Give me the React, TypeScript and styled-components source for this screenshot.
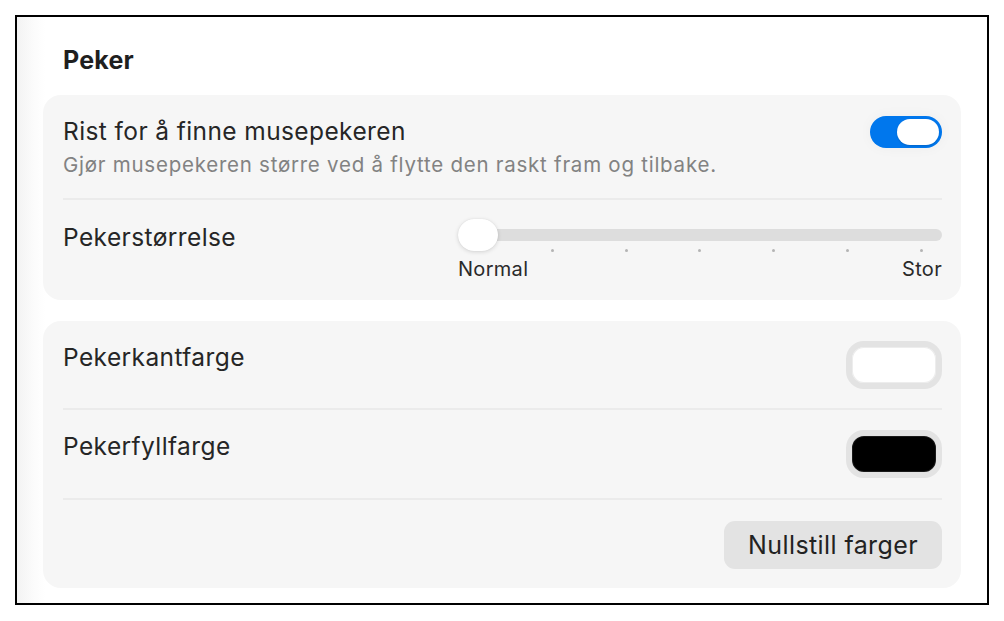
import React, { useState } from "react";
import styled, { createGlobalStyle } from "styled-components";

const GlobalStyle = createGlobalStyle`
  html, body {
    margin: 0;
    padding: 0;
    background: #ffffff;
  }
  body {
    font-family: Inter, "Noto Sans", "Liberation Sans", sans-serif;
    color: #262626;
    -webkit-font-smoothing: antialiased;
  }
`;

const Page = styled.div`
  padding: 15px;
`;

const Frame = styled.div`
  width: 974px;
  height: 590px;
  box-sizing: border-box;
  border: 2px solid #000;
  background: linear-gradient(to right, #f3f3f3 0px, #fbfbfb 16px, #ffffff 28px);
  padding: 0 26px 0 26px;
  display: flex;
  flex-direction: column;
  gap: 21px;
  overflow: hidden;
`;

const Heading = styled.h2`
  margin: 28px 0 -1px;
  padding-left: 20px;
  font-size: 25px;
  line-height: 30px;
  font-weight: 700;
  letter-spacing: 0.2px;
  color: #1f1f1f;
`;

const Card = styled.section`
  background: #f6f6f6;
  border-radius: 18px;
  padding: 0 19px 0 20px;
  display: flex;
  flex-direction: column;
`;

const Row = styled.div<{ $pad: string; $last?: boolean }>`
  display: flex;
  justify-content: space-between;
  align-items: flex-start;
  padding: ${(p) => p.$pad};
  border-bottom: 2px solid ${(p) => (p.$last ? "transparent" : "#ebebeb")};
`;

const TextBlock = styled.div`
  display: flex;
  flex-direction: column;
`;

const Label = styled.div<{ $offset?: number }>`
  font-size: 24.5px;
  line-height: 28px;
  letter-spacing: 0.4px;
  color: #262626;
  margin-top: ${(p) => p.$offset ?? 0}px;
`;

const Hint = styled.div`
  font-size: 20.5px;
  line-height: 24px;
  letter-spacing: 0.75px;
  margin-top: 8px;
  color: #828282;
`;

const Toggle = styled.button<{ $on: boolean }>`
  width: 72px;
  height: 32px;
  border: none;
  border-radius: 16px;
  padding: 0 3px;
  background: ${(p) => (p.$on ? "#0077ed" : "#d9d9d9")};
  display: flex;
  align-items: center;
  justify-content: ${(p) => (p.$on ? "flex-end" : "flex-start")};
  cursor: pointer;
  box-shadow: 0 0 14px rgba(0, 0, 0, 0.04);
`;

const ToggleKnob = styled.span`
  width: 42px;
  height: 26px;
  border-radius: 13px;
  background: #ffffff;
  box-shadow: 0 1px 2px rgba(0, 0, 0, 0.15);
`;

const SliderBox = styled.div`
  width: 484px;
  display: flex;
  flex-direction: column;
`;

const Rail = styled.div`
  position: relative;
  height: 32px;
  display: flex;
  align-items: center;
`;

const Track = styled.div`
  width: 100%;
  height: 12px;
  border-radius: 6px;
  background: #dddddd;
`;

const Thumb = styled.div`
  position: absolute;
  top: 0;
  width: 40px;
  height: 32px;
  border-radius: 16px;
  background: #ffffff;
  box-shadow: 0 1px 4px rgba(0, 0, 0, 0.14), 0 0 1px rgba(0, 0, 0, 0.1);
`;

const Ticks = styled.div`
  display: flex;
  justify-content: space-between;
  padding: 0 19px;
  margin-top: -2px;
`;

const Tick = styled.span<{ $covered?: boolean }>`
  width: 3px;
  height: 3px;
  border-radius: 50%;
  background: ${(p) => (p.$covered ? "transparent" : "#b4b4b4")};
`;

const ScaleLabels = styled.div`
  display: flex;
  justify-content: space-between;
  margin-top: 6px;
  font-size: 20px;
  line-height: 22px;
  letter-spacing: 0.3px;
  color: #2a2a2a;
`;

const Swatch = styled.div<{ $fill: string; $ring: string }>`
  width: 84px;
  height: 36px;
  border-radius: 18px;
  border: 6px solid #e3e3e3;
  background: ${(p) => p.$fill};
  box-shadow: inset 0 0 0 1px ${(p) => p.$ring};
`;

const ButtonRow = styled.div`
  display: flex;
  justify-content: flex-end;
  padding: 21px 0 19px;
`;

const ResetButton = styled.button`
  height: 48px;
  padding: 0 24px;
  border: none;
  border-radius: 11px;
  background: #e3e3e3;
  font-family: inherit;
  font-size: 25px;
  letter-spacing: 0.4px;
  color: #222222;
  cursor: pointer;
`;

const App = () => {
  const [shake, setShake] = useState(true);
  const [size] = useState(0);
  const steps = 7;

  return (
    <Page>
      <GlobalStyle />
      <Frame>
        <Heading>Peker</Heading>

        <Card>
          <Row $pad="21px 0 21px">
            <TextBlock>
              <Label $offset={1}>Rist for å finne musepekeren</Label>
              <Hint>Gjør musepekeren større ved å flytte den raskt fram og tilbake.</Hint>
            </TextBlock>
            <Toggle $on={shake} onClick={() => setShake(!shake)}>
              <ToggleKnob />
            </Toggle>
          </Row>
          <Row $pad="19px 0 18px" $last>
            <Label $offset={4}>Pekerstørrelse</Label>
            <SliderBox>
              <Rail>
                <Track />
                <Thumb style={{ left: (size / (steps - 1)) * 444 }} />
              </Rail>
              <Ticks>
                {Array.from({ length: steps }).map((_, i) => (
                  <Tick key={i} $covered={i === size} />
                ))}
              </Ticks>
              <ScaleLabels>
                <span>Normal</span>
                <span>Stor</span>
              </ScaleLabels>
            </SliderBox>
          </Row>
        </Card>

        <Card>
          <Row $pad="20px 0 19px">
            <Label $offset={2}>Pekerkantfarge</Label>
            <Swatch $fill="#ffffff" $ring="#ededed" />
          </Row>
          <Row $pad="20px 0 20px">
            <Label $offset={2}>Pekerfyllfarge</Label>
            <Swatch $fill="#000000" $ring="#1a1a1a" />
          </Row>
          <ButtonRow>
            <ResetButton>Nullstill farger</ResetButton>
          </ButtonRow>
        </Card>
      </Frame>
    </Page>
  );
};

export default App;
